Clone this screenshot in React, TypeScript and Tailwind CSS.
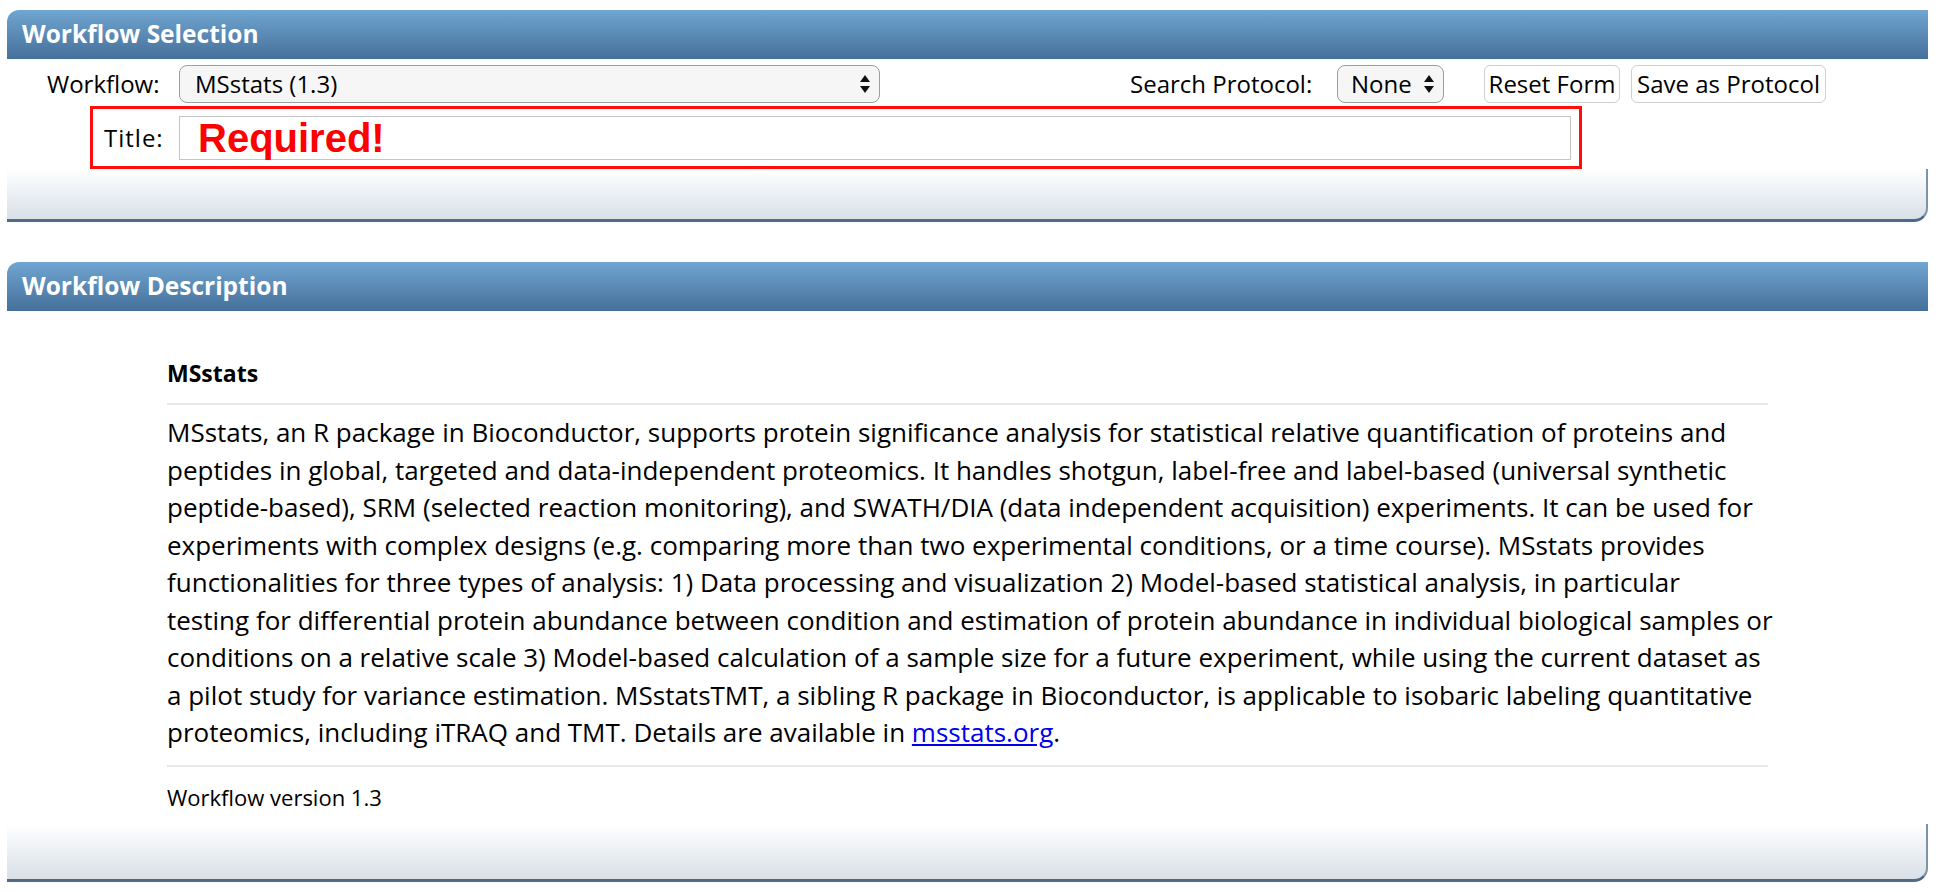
import React from "react";

const UpDown = () => (
  <svg width="12" height="20" viewBox="0 0 12 20" className="shrink-0">
    <path d="M6 1 L11 8 L1 8 Z" fill="#111" />
    <path d="M6 19 L11 12 L1 12 Z" fill="#111" />
  </svg>
);

const PanelHeader = ({ title }: { title: string }) => (
  <div className="flex h-[49px] items-center rounded-tl-[12px] bg-gradient-to-b from-[#70a6d1] to-[#45709a] px-[15px] text-[24.5px] font-bold text-white">
    {title}
  </div>
);

const PanelFooter = ({ className = "" }: { className?: string }) => (
  <div
    className={
      "rounded-br-[14px] border-r-[2px] border-b-[3px] border-r-[#7d93a8] border-b-[#4d6b89] bg-gradient-to-b from-white to-[#d9e0e8] " +
      className
    }
  />
);

// line breaks follow the original page
const description = [
  "MSstats, an R package in Bioconductor, supports protein significance analysis for statistical relative quantification of proteins and",
  "peptides in global, targeted and data-independent proteomics. It handles shotgun, label-free and label-based (universal synthetic",
  "peptide-based), SRM (selected reaction monitoring), and SWATH/DIA (data independent acquisition) experiments. It can be used for",
  "experiments with complex designs (e.g. comparing more than two experimental conditions, or a time course). MSstats provides",
  "functionalities for three types of analysis: 1) Data processing and visualization 2) Model-based statistical analysis, in particular",
  "testing for differential protein abundance between condition and estimation of protein abundance in individual biological samples or",
  "conditions on a relative scale 3) Model-based calculation of a sample size for a future experiment, while using the current dataset as",
  "a pilot study for variance estimation. MSstatsTMT, a sibling R package in Bioconductor, is applicable to isobaric labeling quantitative",
];

const App = () => {
  return (
    <div
      className="min-h-screen bg-white pt-[10px] text-[24px] text-black"
      style={{ fontFamily: '"Open Sans", "Noto Sans", sans-serif' }}
    >
      {/* workflow selection */}
      <section className="ml-[7px] mr-[10px]">
        <PanelHeader title="Workflow Selection" />
        <div className="bg-white">
          <div className="flex h-[47px] items-center pt-[2px]">
            <span className="ml-[40px] w-[127px] whitespace-nowrap">Workflow:</span>
            <div className="ml-[5px] flex h-[38px] w-[701px] items-center justify-between rounded-[8px] border border-[#9d9d9d] bg-[#f6f6f6] pl-[15px] pr-[8px]">
              <span>MSstats (1.3)</span>
              <UpDown />
            </div>
            <span className="ml-[250px] w-[197px] whitespace-nowrap">Search Protocol:</span>
            <div className="ml-[10px] flex h-[38px] w-[107px] items-center justify-between rounded-[8px] border border-[#9d9d9d] bg-[#f6f6f6] pl-[13px] pr-[8px]">
              <span>None</span>
              <UpDown />
            </div>
            <button className="ml-[40px] h-[38px] w-[136px] whitespace-nowrap rounded-[6px] border border-[#cfcfcf] bg-white leading-none">
              Reset Form
            </button>
            <button className="ml-[11px] h-[38px] w-[195px] whitespace-nowrap rounded-[6px] border border-[#cfcfcf] bg-white leading-none">
              Save as Protocol
            </button>
          </div>
          <div className="ml-[83px] flex h-[63px] w-[1492px] items-center border-[3px] border-[#ff0d0d] pl-[11px] pr-[8px]">
            <span className="w-[75px] tracking-[1px]">Title:</span>
            <div className="flex h-[44px] flex-1 items-center border border-[#c4c4c4] bg-white pl-[18px]">
              <span
                className="text-[40px] font-bold leading-none text-[#ff0000]"
                style={{ fontFamily: '"Liberation Sans", Arial, sans-serif' }}
              >
                Required!
              </span>
            </div>
          </div>
        </div>
        <PanelFooter className="h-[53px]" />
      </section>

      {/* workflow description */}
      <section className="ml-[7px] mr-[10px] mt-[40px]">
        <PanelHeader title="Workflow Description" />
        <div className="bg-white px-[160px] pt-[47px]">
          <h2 className="text-[23px] font-bold leading-[30px]">MSstats</h2>
          <hr className="mt-[15px] border-t-2 border-[#e8e8e8]" />
          <p className="mt-[9px] text-[26px] leading-[37.5px]">
            {description.map((line, i) => (
              <span key={i} className="block whitespace-nowrap">
                {line}
              </span>
            ))}
            <span className="block whitespace-nowrap">
              proteomics, including iTRAQ and TMT. Details are available in{" "}
              <a href="#" className="text-[#0000ee] underline">
                msstats.org
              </a>
              .
            </span>
          </p>
          <hr className="mt-[13px] border-t-2 border-[#e8e8e8]" />
          <div className="pb-[12px] pt-[15px] text-[22px] leading-[30px]">Workflow version 1.3</div>
        </div>
        <PanelFooter className="h-[58px]" />
      </section>
    </div>
  );
};

export default App;
